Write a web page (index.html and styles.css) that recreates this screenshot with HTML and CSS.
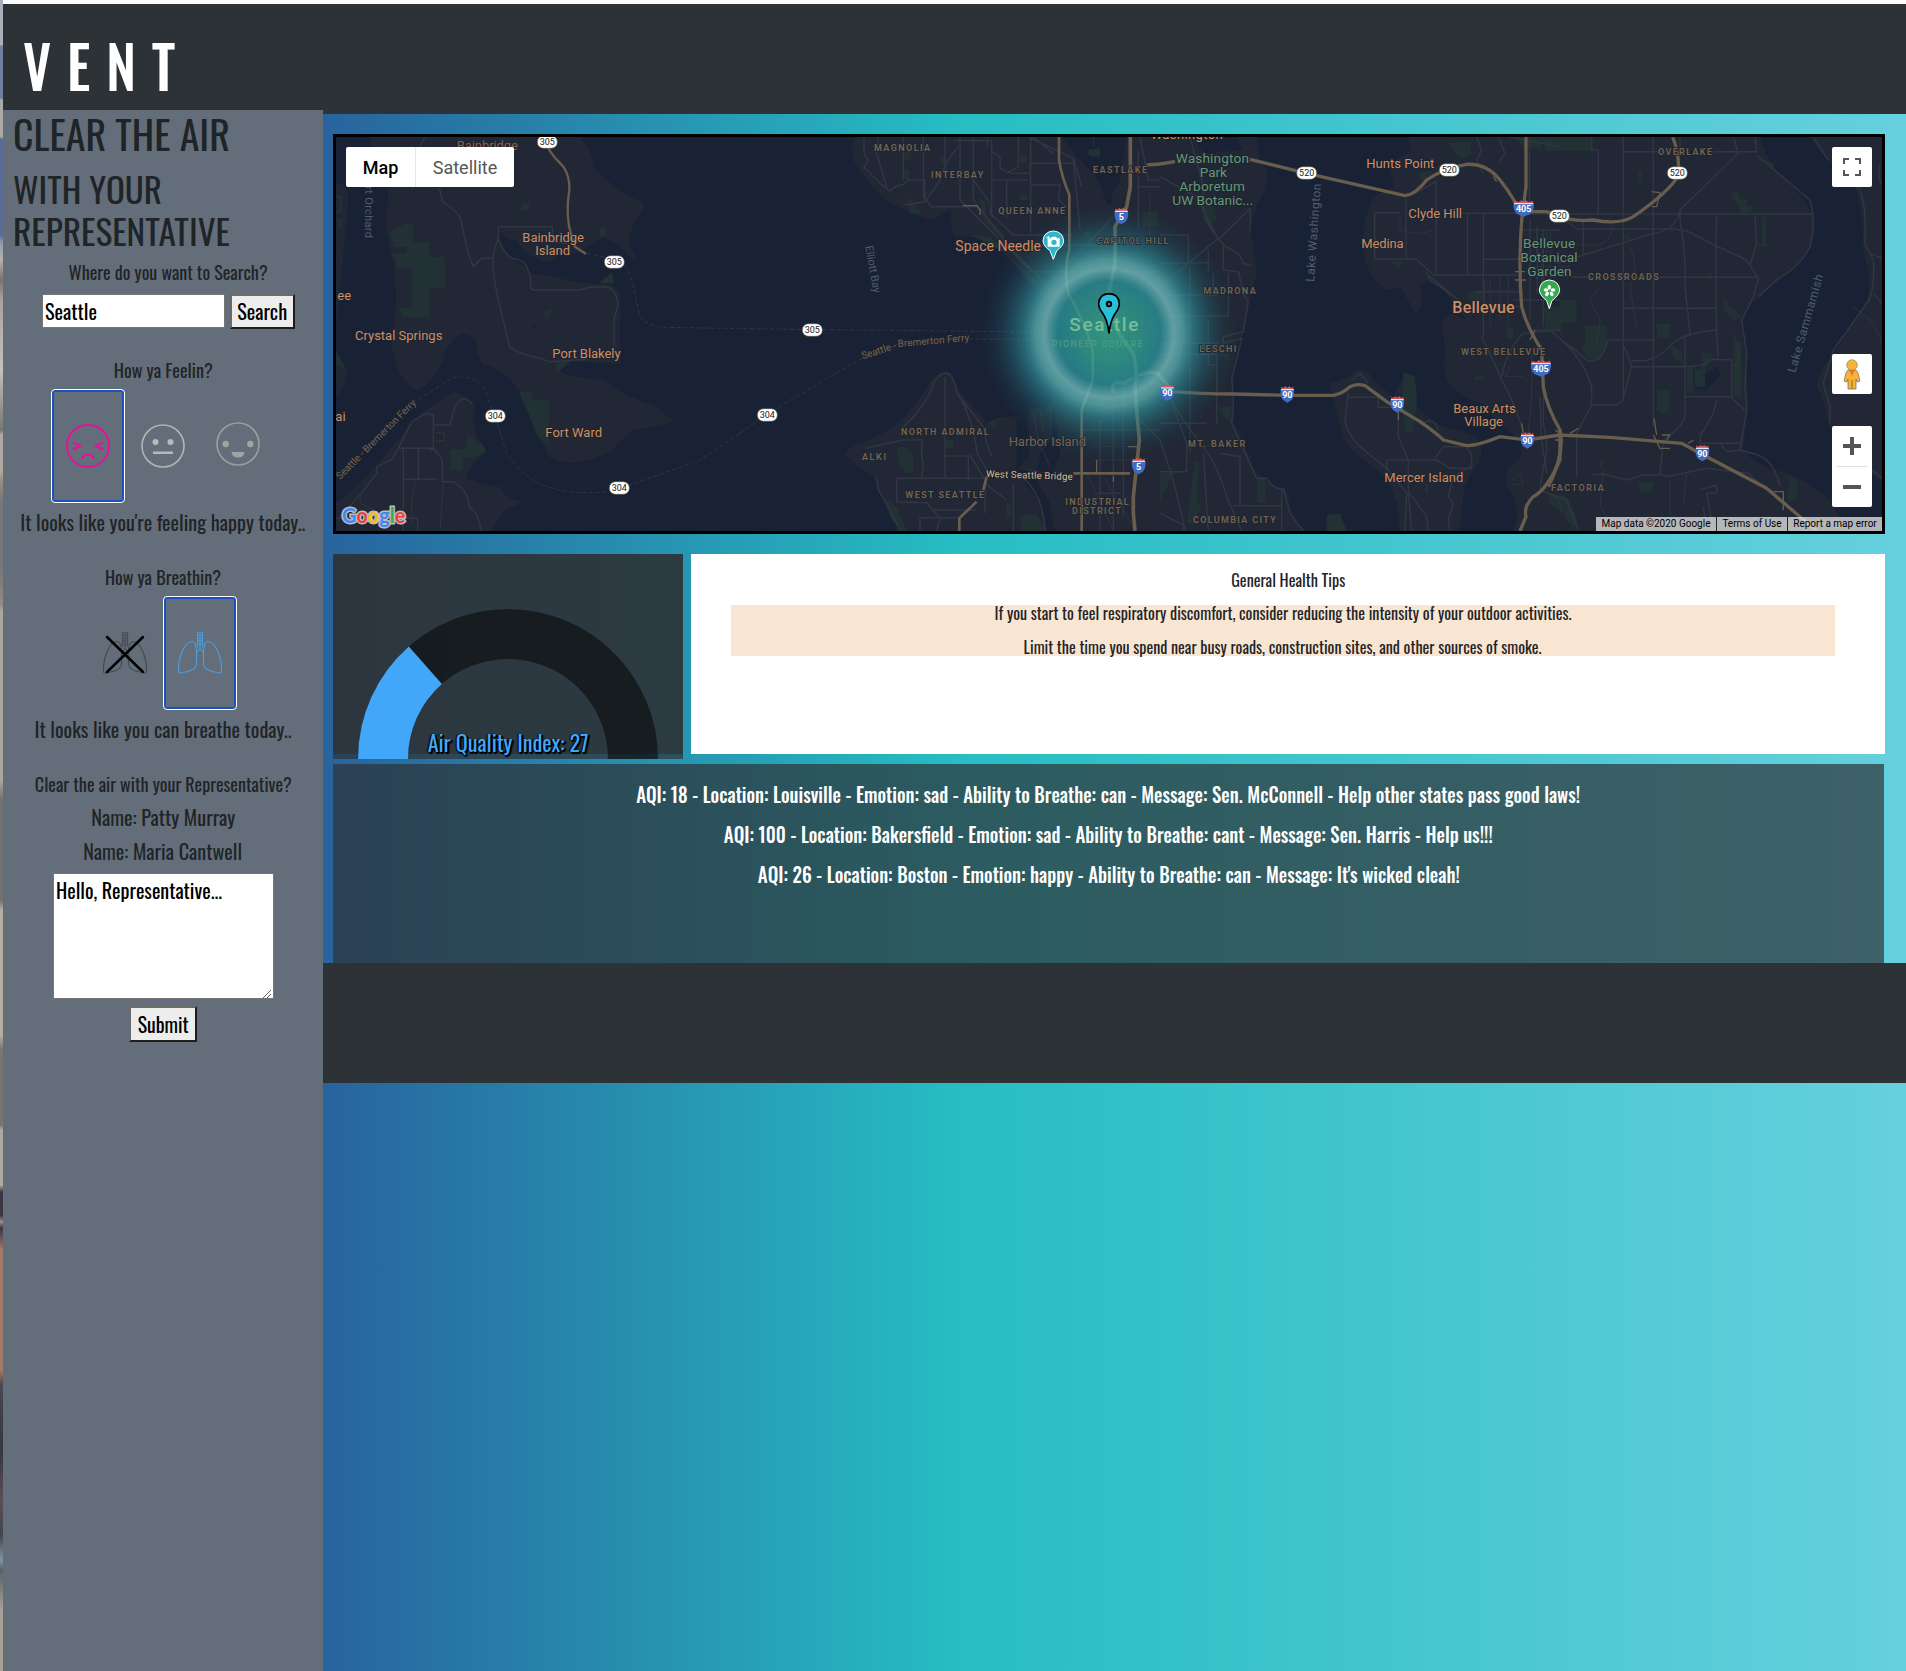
FILE: index.html
```html
<!DOCTYPE html>
<html lang="en">
<head>
<meta charset="utf-8">
<title>Vent</title>
<link rel="stylesheet" href="styles.css">
</head>
<body>
<div class="photo-edge"></div>
<div class="app">
<header class="header"><h1 class="logo fit left" data-w="168">VENT</h1></header>
<div class="body">
<aside class="sidebar">
  <h2 class="title"><span class="fit left" data-w="217">CLEAR THE AIR</span></h2>
  <h3 class="subtitle"><span class="fit left" data-w="149">WITH YOUR</span><span class="fit left" data-w="217">REPRESENTATIVE</span></h3>
  <div class="question first"><span class="fit" data-w="199">Where do you want to Search?</span></div>
  <div class="search-row">
    <div class="field"><span class="fit left" data-w="52">Seattle</span></div>
    <button class="btn search"><span class="fit" data-w="50">Search</span></button>
  </div>
  <div class="question"><span class="fit" data-w="99">How ya Feelin?</span></div>
  <div class="choices">
    <div class="choice selected"><svg width="46" height="46" viewBox="-23 -23 46 46" fill="none" stroke="#e6109b" stroke-width="2"><circle r="21"/><path d="M-15 -3.500L-8 0L-15 3.500M15 -3.500L8 0L15 3.500M-6 13Q-4 8.500 0 8.500T6 13" stroke-width="2.200"/></svg></div>
    <div class="choice"><svg width="46" height="46" viewBox="-23 -23 46 46" fill="#b9b9b9"><circle r="21" fill="none" stroke="#b4b4b4" stroke-width="1.600"/><circle cx="-7.500" cy="-4" r="3"/><circle cx="7.500" cy="-4" r="3"/><path d="M-10 5.500H10V8H-10Z"/></svg></div>
    <div class="choice raised"><svg width="46" height="46" viewBox="-23 -23 46 46" fill="#a2a2a2"><circle r="21" fill="none" stroke="#9c9c9c" stroke-width="1.700"/><circle cx="-12.300" r="3.200"/><circle cx="12.300" r="3.200"/><path d="M-6.500 8H6.500Q6 13.500 0 13.500T-6.500 8Z"/></svg></div>
  </div>
  <div class="answer"><span class="fit" data-w="285">It looks like you're feeling happy today..</span></div>
  <div class="question"><span class="fit" data-w="116">How ya Breathin?</span></div>
  <div class="choices pair">
    <div class="choice"><svg width="46" height="46" viewBox="0 0 46 46" fill="none" stroke="#454b52"><use href="#lungs"/><path d="M5 7L41 42M41 7L5 42" stroke="#000" stroke-width="2.500" stroke-linecap="round"/></svg></div>
    <div class="choice selected"><svg width="46" height="46" viewBox="0 0 46 46" fill="none" stroke="#4a9bdc"><g id="lungs" stroke-width="1.200"><path d="M20.500 17V3Q23 1.500 25.500 3V17M23 4V19M19.500 25V22L23 19L26.500 22V25M20.500 5H25.500M20.500 8H25.500M20.500 11H25.500M20.500 14H25.500"/><path d="M19.500 34V20Q19 11.500 14.500 11.500Q9 12 5 22Q1 32 1.500 41Q1.500 43.500 4 43L14 40.500Q19 38 19.500 34ZM26.500 34V20Q27 11.500 31.500 11.500Q37 12 41 22Q45 32 44.500 41Q44.500 43.500 42 43L32 40.500Q27 38 26.500 34Z"/></g></svg></div>
  </div>
  <div class="answer"><span class="fit" data-w="257">It looks like you can breathe today..</span></div>
  <div class="question"><span class="fit" data-w="257">Clear the air with your Representative?</span></div>
  <div class="reps"><div><span class="fit" data-w="144">Name: Patty Murray</span></div><div><span class="fit" data-w="159">Name: Maria Cantwell</span></div></div>
  <div class="message"><span class="fit left" data-w="166">Hello, Representative...</span><svg class="grip" width="8" height="8" viewBox="0 0 8 8" stroke="#666" fill="none"><path d="M0 8L8 0M4 8L8 4"/></svg></div>
  <button class="btn submit"><span class="fit" data-w="51">Submit</span></button>
</aside>
<div class="content">
<main class="main">
  <section class="map">
  <svg class="map-canvas" viewBox="336 137 1546 394" width="1546" height="394">
    <defs>
      <radialGradient id="glow"><stop offset="0" stop-color="#36b092" stop-opacity=".8"/><stop offset=".25" stop-color="#30a396" stop-opacity=".76"/><stop offset=".4" stop-color="#2a939b" stop-opacity=".78"/><stop offset=".5" stop-color="#71bcbd" stop-opacity=".8"/><stop offset=".57" stop-color="#58b0b3" stop-opacity=".77"/><stop offset=".66" stop-color="#2f939d" stop-opacity=".62"/><stop offset=".78" stop-color="#27808e" stop-opacity=".34"/><stop offset=".9" stop-color="#1f6678" stop-opacity=".12"/><stop offset="1" stop-color="#1f6678" stop-opacity="0"/></radialGradient>
      <g id="pill"><rect x="-30" y="-19" width="60" height="38" rx="18" fill="#fff" stroke="#59503f" stroke-width="2"/></g>
      <g id="inter"><path d="M-20 -15H20Q23 5 13 17L0 25L-13 17Q-23 5 -20 -15Z" fill="#3f6cc0"/><path d="M-18 -15V-23L-12 -19L-6 -24L0 -20L6 -24L12 -19L18 -23V-15Z" fill="#d65454"/><path d="M-19 -14H19" stroke="#fff" stroke-width="3"/></g>
      <g id="inter3"><path d="M-30 -15H30Q33 5 20 17L0 25L-20 17Q-33 5 -30 -15Z" fill="#3f6cc0"/><path d="M-28 -15V-22L-14 -19L-7 -24L0 -20L7 -24L14 -19L28 -22V-15Z" fill="#d65454"/><path d="M-29 -14H29" stroke="#fff" stroke-width="3"/></g>
    </defs>
    <rect x="336" y="137" width="1546" height="394" fill="#192134"/>
    <g class="land">
      <path transform="translate(320 120) scale(.33333)" d="M48 190Q85 190 85 240Q70 400 55 560L48 600ZM48 700Q85 740 80 770Q70 810 48 830ZM150 51H780Q820 100 820 140Q870 200 970 250Q975 270 945 300Q925 350 930 380L952 422Q920 410 895 375L850 350L780 395Q740 410 725 400L690 425Q640 420 610 390L590 360Q560 360 540 335V370L570 405Q610 440 640 462Q700 465 740 480Q800 495 870 490L900 520V730L740 724L715 750Q740 770 850 780Q910 830 1000 855L1062 903Q1000 925 940 930Q900 960 880 990Q820 1025 750 1028Q690 1025 680 1000Q670 960 640 920Q620 830 580 790Q540 740 490 735Q465 700 470 670Q440 620 400 660Q370 690 370 720Q330 800 290 812Q240 780 225 720Q205 650 220 620Q240 500 205 360Q190 300 205 250Q205 150 160 90ZM48 1233V1150Q100 1110 170 1035Q240 950 300 880Q360 840 400 815Q450 830 465 850Q455 920 470 950Q500 980 495 1000Q440 1050 440 1075Q500 1100 540 1100Q560 1140 600 1140Q600 1160 560 1165Q530 1200 515 1233Z"/>
      <path transform="translate(740 120) scale(.33333)" d="M345 51Q330 90 340 120Q380 190 440 240Q500 280 570 300Q600 290 630 270L640 350H690Q760 360 800 410L860 480Q900 520 940 560L1000 640L1050 800L960 830L920 860Q870 860 865 880V1010L830 1050V890Q780 885 740 910L720 880Q680 840 655 810Q640 760 610 755Q580 760 560 800Q520 870 460 920Q400 960 340 975L312 1000Q350 1040 400 1070Q420 1130 440 1170L480 1233H1262V51Z"/>
      <path transform="translate(1160 120) scale(.33333)" d="M0 51H300L320 130Q330 200 290 260L270 330Q290 420 290 460Q260 560 250 640Q220 700 220 780L215 900Q260 970 280 1050Q340 1100 380 1110Q390 1180 430 1233H0ZM745 51L755 90L690 130L700 200L640 230Q600 330 610 380Q620 480 680 510L720 500L770 585Q800 530 780 490Q830 480 850 510L920 600Q850 560 845 620Q860 700 850 740Q860 820 960 850Q1000 900 1080 960Q1100 1010 1050 1040Q1020 1080 1060 1130Q1080 1180 1060 1233H1202V51ZM510 790Q560 780 590 750Q620 740 640 780L700 830Q740 740 765 770L775 870Q820 900 850 920Q900 930 950 950Q980 1000 950 1040Q920 1070 910 1120L900 1233H720L710 1150L680 1070Q600 1020 550 960Q530 880 510 790ZM500 1185L535 1180L565 1233H500Z"/>
      <rect x="1559" y="137" width="323" height="394"/>
    </g>
    <g class="water">
      <path transform="translate(740 120) scale(.33333)" d="M965 51L1160 51L1140 180L1115 220Q1120 260 1100 250L1070 170L1010 110ZM940 850L960 1000L930 1080L890 1060L900 1000L935 960ZM830 1050H870L930 1150L945 1233H920L900 1150Z"/>
      <path transform="translate(1160 120) scale(.33333)" d="M100 51H230L250 90L130 100ZM290 51H330V150L300 130Z"/>
      <path transform="translate(1500 120) scale(.33333)" d="M780 51H930Q970 120 1050 170Q1090 230 1090 400Q1120 480 1100 540Q1050 620 1010 690L970 740Q940 800 960 820Q980 870 990 920L1100 1050L1146 1090V1233H1040L990 1140Q900 1060 820 1050Q730 1010 730 980L745 860Q740 750 740 700Q720 610 730 580Q830 480 880 440Q950 370 945 310Q930 250 860 180Q800 130 780 51ZM580 790L650 740L662 765L615 812L585 805ZM472 620L498 615L490 638H478Z"/>
      <path transform="translate(320 120) scale(.33333)" d="M275 405L290 398L305 410V432H290ZM638 612H646V625H638Z"/>
    </g>
    <g class="park">
      <path transform="translate(320 120) scale(.33333)" d="M208 335L255 312H278V365H327V410H374V506H327V592H250L236 563H274V443H233L217 400H260V381H222ZM604 250H628V274H604ZM838 325H860V345L838 350ZM835 488L875 460L885 490ZM670 575L700 560L680 602ZM596 815H638V838H686V970L655 955L625 880ZM390 986H440V940L495 980V995L470 1010L430 1015V1050H390ZM48 692L75 742L48 735ZM705 728L760 718L712 757Z"/>
      <path transform="translate(740 120) scale(.33333)" d="M490 100L510 95V120H490ZM488 148H508V178H488ZM603 112H618V135H603ZM840 105H860V130H840ZM715 230L735 245L740 290L780 330L800 350L770 345L730 300ZM838 225L862 220V240H838ZM690 345L750 350L830 430L900 490L880 495L800 400ZM502 225L520 250L545 280H510ZM1208 275H1255V320H1208ZM1040 90L1080 85V110H1050ZM615 960H640V985H615ZM470 980H500L520 1000V1060H500L475 1030ZM440 1140L470 1160L500 1233H480L450 1190ZM798 1150H815V1195H798ZM840 1185H890L920 1233H845ZM740 910L790 888L760 920ZM1035 335L1055 330V350H1035ZM520 908L560 903L540 912Z"/>
      <path transform="translate(1160 120) scale(.33333)" d="M120 250L160 260L170 300L150 320L130 300ZM865 70L930 65L935 100L910 120L880 95ZM770 160L825 150L790 190ZM693 425L730 420L715 450ZM925 515H965V542H925ZM1140 51H1200V90L1150 70ZM730 755L765 770L770 840L760 935H735L725 860ZM175 860H215V905L190 890ZM105 1025H118L110 1140L125 1160L100 1210H80ZM290 1080L315 1070V1150H290ZM500 1185L540 1180L560 1233H500ZM0 1060L45 1055L0 1145ZM185 700H205V730ZM940 770L970 765V780H945ZM1040 625H1060V650H1040ZM795 1092H805V1115H795Z"/>
      <path transform="translate(1500 120) scale(.33333)" d="M135 51H273V94H135ZM45 51H125V88L70 85ZM415 155H425V190H415ZM695 218L718 215V235L740 240V255L767 260L745 283H720V265L695 235ZM785 290H800V380H770V370H785ZM372 340L392 345V360H375ZM115 565L180 560V540H230V608H183V640L135 625V585ZM255 615H320V680Q300 725 275 722Q230 690 255 670ZM470 612H510V655H470ZM508 670L545 695L550 740H580V820H560V740L520 710ZM605 698H635V720L615 740V800H585V750H605ZM670 530L690 560L730 590L700 600L672 570ZM700 660L724 665V830H700ZM470 810H510V870L490 884L470 870ZM790 120L825 130L815 150ZM140 1120L200 1130L235 1200L220 1230L190 1180L150 1150ZM415 1085H460V1115H418ZM870 1075H890V1130L860 1150ZM590 940L605 930V945ZM20 630L40 620V655H20ZM300 1020H310V1043H300ZM610 458H635V470Z"/>
    </g>
    <g class="ferry">
      <path transform="translate(320 120) scale(.33333)" d="M48 1070L285 845L400 772Q460 765 490 800L525 890L560 1000Q620 1090 710 1108Q820 1130 900 1105Q1060 1050 1140 1020L1260 940M800 400L880 418Q920 430 935 480L960 590Q985 622 1040 622L1260 626L2160 636"/>
      <path transform="translate(740 120) scale(.33333)" d="M0 940L85 880L355 720L470 675Q560 655 700 657L1000 660"/>
    </g>
    <g class="roads">
      <path transform="translate(320 120) scale(.33333)" d="M315 51L300 80M358 205Q365 225 367 245Q400 265 420 290L445 400L460 440L487 414H520Q515 460 540 560L568 680Q600 705 650 712L690 725L800 718M520 414Q525 370 535 358V320H697V365L750 372M535 358Q550 400 575 415Q610 418 620 440L632 470V505L640 510H780Q820 495 870 504Q895 520 893 560L882 600V680M60 1190Q120 1130 170 1060V1040L215 1018L235 985H342L367 1020V1085H400Q450 1120 447 1160Q480 1180 482 1233M235 985L275 905L320 880L340 885V990M342 985L330 990M250 985V1233M295 985V1078M250 1078H350M48 1195H293V1233M343 915H390L405 860Q430 820 455 852" />
      <path class="minor" transform="translate(320 120) scale(.33333)" d="M48 230H62V275H48M48 300H65L55 325M345 938H373V962H345M120 1120V1150L160 1170M275 1210Q270 1110 300 1060M360 1233L370 1090"/>
      <path transform="translate(740 120) scale(.33333)" d="M372 51V100L385 120L372 142L420 190L450 213Q475 190 490 195L505 180H555V245L495 255M415 51L410 100L440 200M490 51V180M550 51V230L575 260H710M655 80Q610 130 600 180L555 245M615 51V175M640 62H755V95L780 110V145L815 160H870M700 51V240L800 370L960 540M742 51V80M660 51V240L870 450M755 95V290M755 180H865M800 180V290M872 51V340M870 160V130H1000M870 195H960L955 240L980 260M755 250L750 280L820 345H1000M835 51V140L800 160M865 51L1000 115L1025 200M700 180L750 250M880 51L940 100M1000 115L1020 330M1120 290L900 520M1200 51L1225 180H1260M1195 90V320M1260 200H1190M860 455H1260M870 375H1100M480 930Q560 860 580 790Q600 755 625 760Q645 775 650 820L730 920Q740 980 755 1010M615 770V1008H685V1080M615 1008V1075H470V1145L560 1148L600 1195L590 1233M375 985L490 960H548Q540 1000 550 1030L545 1075M410 1070L415 1110L440 1150L480 1233M580 1170H710M540 1233V1193H650M655 820Q700 900 712 1000L740 1050M690 1005L735 1080V1180M615 1075H730M735 1090L800 1140M820 1090V1233M845 1070Q910 1120 915 1233M1080 900V1233M1120 850V1233M1150 830V1190M1030 930H1260M1070 1120H1140M1200 900L1260 960"/>
      <path class="minor" transform="translate(740 120) scale(.33333)" d="M880 880L895 960L930 1040M900 870L910 930M860 1050L930 1060M1040 1060L1120 1233M1090 1070L1180 1220M1050 980H1180M1060 1020H1200M1060 51V80M1230 220V640M1205 430V700M1180 520V700M1130 430V860M1100 480V870M1150 470V850M1050 500H1260M1000 460L1150 610M980 490L1120 640M960 510L1090 650M1040 450L900 590M1070 480L950 600M1100 510L980 630M1120 550L1010 650M1160 400V540M1080 720H1250M1080 760H1250M1200 640H1260"/>
      <path transform="translate(1160 120) scale(.33333)" d="M0 170L110 230L175 360L270 265V340M90 51L130 200V260Q140 320 175 355L0 500M175 360L190 370V450L235 455L250 520L265 545L250 635L190 650V670L245 655L215 780Q225 850 215 910L290 1075H320Q340 1110 370 1105L390 1180L430 1233M190 375L240 405L250 430L272 435M0 345H85V430M0 430L150 428M145 390V455M160 460V520M90 440V1000M0 525H175M205 460V588H0M0 670H175M0 703H170V910M145 600V735H170V830M0 910H140M80 970V1055H0M0 790L70 900L150 1010Q180 1060 200 1130L245 1233M130 1000L145 1233M0 1180L70 1215V1233M240 1005V1155M220 1157H365V1110M365 1157V1233M0 960Q50 1100 75 1233M40 860L80 970M180 1000L240 1010M950 51L965 90L950 120L970 160M1015 51L1035 100L1015 130M1050 51L1200 80M644 278H720M644 278V417H768L820 465H1080M738 235V415M828 185V465M765 220L828 185M922 280V465M905 280H1080M970 280V650M970 418H1080M805 465L895 540M800 455L810 480L890 535M965 650Q1000 720 1025 780Q1060 840 1085 920M1025 770Q1040 690 1090 640L1200 630M1110 300V600M1132 320V520M1150 330V620M1060 540H1200M940 515H1080M970 560H1080M1080 330H1200M575 780L600 760L625 790M565 820L555 900Q560 940 600 980L680 1045L740 1120L735 1233M565 832H655V862H700M715 880V950L745 1020V1115L800 1190L805 1233M680 1020H830L870 1045H935V1000L920 985M825 1015L850 980H910M680 1020V1045M745 1120L755 1233M930 1040L880 1070L865 1130L880 1150L865 1200L870 1233M790 910Q820 890 835 930M1140 830L1145 960L1160 1060"/>
      <path class="minor" transform="translate(1160 120) scale(.33333)" d="M720 290V330Q770 350 820 330M975 480V560M990 470V620M1020 470V600M1045 470V620M1170 330V460M1115 700Q1120 860 1100 960M1060 1080L1080 1060L1090 1090L1060 1095M1050 740L1035 770L1090 770"/>
      <path transform="translate(1500 120) scale(.33333)" d="M88 51V250M250 300V410M275 51V90H295V280M370 51V840L350 855H275M460 51V920M372 95H500M640 95H770L765 51M700 51L715 100L540 270Q530 330 460 340L170 430M80 282H935M195 300L230 327H525L555 335M540 270V300Q560 420 555 500L570 640M555 330L650 378L740 420L775 475L760 530L725 600L740 700L735 800L740 870L720 990L755 1000Q820 1010 840 1100M650 290L648 380V530L650 640L655 710M765 290L770 370L750 435M540 51V90M770 105L930 240Q950 310 930 380Q900 440 830 480L775 530M215 472H770M370 565H650M650 630Q550 640 520 670Q470 720 430 722H395M100 630H150L190 665Q240 700 260 720Q300 740 325 660H465M370 675L395 735L370 835M395 740H535Q620 740 635 718L695 720V830H555M555 650V880Q560 910 490 960L480 1060L500 1070L620 1045L745 1060L800 1110M650 840L640 880L600 950V970H720M690 830L735 870M190 665Q250 720 275 800V855L230 940V1070M275 1065L310 1062L380 1080L430 1065H480M940 51L985 120M1000 130L1080 210Q1100 260 1095 370L1120 420Q1125 520 1100 550L1000 690L970 790L990 860V910M1140 130Q1130 180 1146 190M1110 400L1146 415M1120 520L1146 550M1060 1000L1146 1075M130 780V910Q150 990 130 1040L120 1110L200 1140L235 1233M660 970L680 995L720 990M600 1110L650 1095V1120H620L640 1233M620 1233L610 1160"/>
      <path class="minor" transform="translate(1500 120) scale(.33333)" d="M390 380Q420 450 390 500L410 620M330 290Q350 350 300 375H200M300 500L270 540L300 600L290 670M700 640L720 700L705 740M310 1050L300 1160L350 1233M510 1080V1200M560 1060L550 1150M110 320V420M125 340V500M140 330V420M90 440H210M90 470H210M150 1120Q190 1140 180 1180M1060 560L1110 600L1146 660"/>
    </g>
    <g class="highway thin">
      <path transform="translate(740 120) scale(.33333)" d="M668 257H710L720 270V285M1070 1020V1060M1120 1085V1068M1165 980H1200"/>
      <path transform="translate(1160 120) scale(.33333)" d="M715 870V900M1085 910L1090 940M1125 630L1110 660M1000 170L1010 185"/>
      <path transform="translate(1500 120) scale(.33333)" d="M462 895L470 945M460 945L480 985H510M485 945H510L500 960M165 930L190 945M235 925L210 940M165 960H190M455 215L480 218L470 260H455M820 1115H850V1170M565 970L580 960M45 455H75M45 480H78"/>
    </g>
    <g class="highway">
      <path transform="translate(320 120) scale(.33333)" stroke-width="7" d="M685 85Q695 105 730 140Q750 170 748 210Q735 290 755 350L765 380L798 402"/>
      <path transform="translate(740 120) scale(.33333)" d="M957 51V120Q965 170 988 225V390Q970 450 985 520Q1040 620 1058 690V780L1025 870V1233M1000 1060H1170M730 1110L740 1070M710 1145L658 1195V1233"/>
      <path transform="translate(740 120) scale(.33333)" stroke-width="11" d="M1171 51V200L1160 260L1125 320V430Q1110 500 1105 530Q1110 620 1180 700Q1195 760 1185 800Q1190 880 1198 960L1180 1130V1180L1185 1233M1220 135L1260 132M1120 820Q1110 780 1150 790Q1230 740 1262 765"/>
      <path transform="translate(1160 120) scale(.33333)" stroke-width="10" d="M0 132L45 125M0 770L40 815Q120 822 220 822L380 826H520Q550 820 570 800Q590 790 615 797L680 845L780 905Q830 940 850 960L920 977Q950 978 1020 950L1100 960L1200 945M270 118L440 160L735 227Q765 225 800 180Q850 145 920 133Q980 130 1020 180Q1060 230 1085 285M1098 51V200L1085 300Q1075 440 1085 560Q1100 620 1145 690L1150 800Q1160 860 1200 930V1020Q1160 1110 1120 1130Q1090 1160 1098 1190L1080 1233M1090 275H1160L1200 288"/>
      <path transform="translate(1500 120) scale(.33333)" stroke-width="10" d="M180 930Q195 1000 145 1100M180 288Q210 305 280 300Q360 315 400 290Q500 220 530 175Q545 120 518 51M180 945L330 952L545 970L600 1000L800 1105L950 1233"/>
    </g>
    <circle cx="1109" cy="333" r="129" fill="url(#glow)"/>
    <g class="labels" transform="translate(320 120) scale(.33333)">
      <g class="town"><text x="410" y="91" textLength="184" fill-opacity=".6">Bainbridge</text><text x="607" y="365" textLength="185">Bainbridge</text><text x="646" y="404" textLength="104">Island</text><text x="105" y="659" textLength="262">Crystal Springs</text><text x="697" y="713" textLength="205">Port Blakely</text><text x="676" y="950" textLength="170">Fort Ward</text><text x="52" y="540">ee</text><text x="46" y="902">ai</text></g>
      <text class="waterway" transform="translate(136 198) rotate(90)" textLength="156">rt Orchard</text>
      <text class="route" transform="translate(60 1080) rotate(-45)" textLength="325">Seattle - Bremerton Ferry</text>
      <g class="num"><use href="#pill" x="682" y="66"/><text x="682" y="76">305</text><use href="#pill" x="883" y="426"/><text x="883" y="436">305</text><use href="#pill" x="526" y="888"/><text x="526" y="898">304</text><use href="#pill" x="898" y="1104"/><text x="898" y="1114">304</text></g>
      <text class="google" x="66" y="1210" textLength="190" lengthAdjust="spacingAndGlyphs"><tspan fill="#4285f4">G</tspan><tspan fill="#ea4335">o</tspan><tspan fill="#fbbc05">o</tspan><tspan fill="#4285f4">g</tspan><tspan fill="#34a853">l</tspan><tspan fill="#ea4335">e</tspan></text>
    </g>
    <g class="labels" transform="translate(740 120) scale(.33333)">
      <g class="area"><text x="402" y="94" textLength="168">MAGNOLIA</text><text x="573" y="175" textLength="157">INTERBAY</text><text x="775" y="283" textLength="200">QUEEN ANNE</text><text x="1059" y="160" textLength="162">EASTLAKE</text><text x="1068" y="373" textLength="217">CAPITOL HILL</text><text x="483" y="946" textLength="263">NORTH ADMIRAL</text><text x="366" y="1021" textLength="72">ALKI</text><text x="496" y="1135" textLength="236">WEST SEATTLE</text><text x="976" y="1156" textLength="190">INDUSTRIAL</text><text x="996" y="1183" textLength="146">DISTRICT</text></g>
      <text class="square" x="936" y="681" textLength="272">PIONEER SQUARE</text>
      <text class="city" x="988" y="632" textLength="207">Seattle</text>
      <text class="town needle" x="646" y="394" textLength="257">Space Needle</text>
      <text class="island" x="806" y="977" textLength="232">Harbor Island</text>
      <text class="bridge" transform="translate(738 1071) rotate(2)" textLength="260">West Seattle Bridge</text>
      <text class="waterway" transform="translate(376 379) rotate(80)" textLength="143">Elliott Bay</text>
      <g class="route"><text transform="translate(368 718) rotate(-18)" textLength="107">Seattle -</text><text transform="translate(474 681) rotate(-5)" textLength="215">Bremerton Ferry</text></g>
      <g class="num"><use href="#pill" x="217" y="630"/><text x="217" y="640">305</text><use href="#pill" x="82" y="885"/><text x="82" y="895">304</text></g>
      <g class="inum"><use href="#inter" x="1144" y="288"/><text x="1144" y="301">5</text><use href="#inter" x="1196" y="1038"/><text x="1196" y="1051">5</text></g>
      <path d="M940 418L930 392Q910 378 909 363Q911 335 940 333Q969 335 971 363Q970 378 950 392Z" fill="#2cb7cb" stroke="#fff" stroke-width="3"/>
      <path d="M923 355H932L936 350H948L952 355H959V380H923Z" fill="#fff"/><circle cx="942" cy="367" r="8" fill="#2cb7cb"/><path d="M920 353H930M925 348V358" stroke="#fff" stroke-width="3"/>
      <path d="M1107 640Q1103 600 1087 578Q1076 565 1076 549Q1079 522 1107 521Q1135 522 1138 549Q1138 565 1127 578Q1111 600 1107 640Z" fill="#28c0d8" stroke="#000" stroke-width="5"/><circle cx="1107" cy="552" r="7" fill="#50707d" stroke="#000" stroke-width="5"/>
    </g>
    <g class="labels" transform="translate(1160 120) scale(.33333)">
      <g class="town"><text x="-28" y="58" textLength="216">Washington</text><text x="619" y="143" textLength="204">Hunts Point</text><text x="745" y="293" textLength="161">Clyde Hill</text><text x="604" y="383" textLength="127">Medina</text><text x="880" y="878" textLength="187">Beaux Arts</text><text x="913" y="917" textLength="116">Village</text><text x="673" y="1085" textLength="237">Mercer Island</text><text class="large" x="877" y="578" textLength="187">Bellevue</text></g>
      <g class="garden"><text x="47" y="129" textLength="220">Washington</text><text x="119" y="171" textLength="82">Park</text><text x="58" y="214" textLength="197">Arboretum</text><text x="37" y="255" textLength="242">UW Botanic...</text></g>
      <g class="area"><text x="130" y="522" textLength="157">MADRONA</text><text x="118" y="696" textLength="111">LESCHI</text><text x="84" y="981" textLength="172">MT. BAKER</text><text x="99" y="1209" textLength="248">COLUMBIA CITY</text><text x="903" y="705" textLength="252">WEST BELLEVUE</text></g>
      <text class="waterway lake" transform="translate(462 486) rotate(-86)" textLength="295">Lake Washington</text>
      <g class="num"><use href="#pill" x="440" y="159"/><text x="440" y="169">520</text><use href="#pill" x="868" y="150"/><text x="868" y="160">520</text></g>
      <g class="inum"><use href="#inter" x="22" y="818"/><text x="22" y="829">90</text><use href="#inter" x="382" y="823"/><text x="382" y="834">90</text><use href="#inter" x="712" y="853"/><text x="712" y="864">90</text><use href="#inter" x="1102" y="961"/><text x="1102" y="972">90</text><use href="#inter3" x="1091" y="265"/><text x="1091" y="276">405</text><use href="#inter3" x="1143" y="745"/><text x="1143" y="756">405</text></g>
    </g>
    <g class="labels" transform="translate(1500 120) scale(.33333)">
      <g class="garden"><text x="69" y="384" textLength="157">Bellevue</text><text x="61" y="426" textLength="172">Botanical</text><text x="82" y="468" textLength="133">Garden</text></g>
      <g class="area"><text x="474" y="105" textLength="162">OVERLAKE</text><text x="264" y="480" textLength="212">CROSSROADS</text><text x="153" y="1113" textLength="158">FACTORIA</text></g>
      <text class="waterway lake" transform="translate(886 760) rotate(-74)" textLength="305">Lake Sammamish</text>
      <g class="num"><use href="#pill" x="178" y="288"/><text x="178" y="298">520</text><use href="#pill" x="532" y="159"/><text x="532" y="169">520</text></g>
      <g class="inum"><use href="#inter" x="607" y="999"/><text x="607" y="1010">90</text></g>
      <path d="M148 566L140 542Q119 525 118 511Q120 482 148 480Q177 482 179 511Q178 525 156 542Z" fill="#35a853" stroke="#fff" stroke-width="3"/>
      <g fill="#fff"><ellipse cx="148" cy="502" rx="5" ry="7"/><ellipse cx="138" cy="510" rx="7" ry="5"/><ellipse cx="159" cy="510" rx="7" ry="5"/><ellipse cx="141" cy="522" rx="5" ry="7" transform="rotate(35 141 522)"/><ellipse cx="155" cy="522" rx="5" ry="7" transform="rotate(-35 155 522)"/></g>
    </g>
  </svg>
  <div class="map-type"><span class="active">Map</span><span>Satellite</span></div>
  <div class="map-tools">
    <div class="tool"><svg width="18" height="18" fill="none" stroke="#555" stroke-width="2"><path d="M1 6V1H6M12 1H17V6M17 12V17H12M6 17H1V12"/></svg></div>
    <div class="tool pegman"><svg width="18" height="31" viewBox="0 0 18 31"><path d="M5 11H13L15 14L17 22L14 23L13 20V30H5V20L4 23L1 22L3 14Z" fill="#f9b233" stroke="#777" stroke-width=".8"/><path d="M6 11H12L9 17Z" fill="#e87a2c"/><circle cx="9" cy="6" r="5.300" fill="#f9b233" stroke="#777" stroke-width=".6"/><path d="M9 21V30" stroke="#8a6d2a"/></svg></div>
    <div class="tool zoom"><svg width="30" height="81" viewBox="0 0 30 81" stroke="#555" stroke-width="4"><path d="M6 20H24M15 11V29M6 61H24"/><path d="M0 40.500H30" stroke="#ddd" stroke-width="1"/></svg></div>
  </div>
  <div class="credits"><span>Map data ©2020 Google</span><span>Terms of Use</span><span>Report a map error</span></div>
  </section>
  <div class="widgets">
    <section class="gauge"><div class="gauge-inner"><svg width="350" height="205" viewBox="0 0 350 205"><path d="M25 205A150 150 0 0 1 325 205H275A100 100 0 0 0 75 205Z" fill="#000" fill-opacity=".5"/><path d="M25 205A150 150 0 0 1 75.800 92.500L108.900 130A100 100 0 0 0 75 205Z" fill="#42a7f8"/></svg><div class="gauge-label"><span class="fit" data-w="161">Air Quality Index: 27</span></div></div></section>
    <section class="tips"><h4><span class="fit" data-w="114">General Health Tips</span></h4><div class="tip-box"><p><span class="fit" data-w="577">If you start to feel respiratory discomfort, consider reducing the intensity of your outdoor activities.</span></p><p><span class="fit" data-w="518">Limit the time you spend near busy roads, construction sites, and other sources of smoke.</span></p></div></section>
  </div>
  <section class="feed">
    <p><span class="fit" data-w="944">AQI: 18 - Location: Louisville - Emotion: sad - Ability to Breathe: can - Message: Sen. McConnell - Help other states pass good laws!</span></p>
    <p><span class="fit" data-w="769">AQI: 100 - Location: Bakersfield - Emotion: sad - Ability to Breathe: cant - Message: Sen. Harris - Help us!!!</span></p>
    <p><span class="fit" data-w="702">AQI: 26 - Location: Boston - Emotion: happy - Ability to Breathe: can - Message: It's wicked cleah!</span></p>
  </section>
</main>
<footer class="footer"></footer>
</div>
</div>
</div>
<script src="fit.js"></script>
</body>
</html>
```
FILE: styles.css
```css
* { box-sizing: border-box; }
body { margin: 0; display: flex; height: 1671px; overflow: hidden; background: #fff; font-family: Oswald, "Liberation Sans Narrow", "Roboto Condensed", Roboto, sans-serif; font-stretch: 75%; color: #1f2427; }
h1, h2, h3, h4, p { margin: 0; font-weight: 400; }
.photo-edge { width: 3px; background: linear-gradient(#a9b0b8 0 45px, #6f80a0 46px 98px, #aaa9a5 100px 137px, #586c96 139px 235px, #8f9aae 242px, #b5b2ab 260px, #806f70 280px, #aaa39e 300px, #c3c1bc 370px, #777 430px, #b0aba2 435px 470px, #a08c7d 480px, #77777a 500px 570px, #918c85 605px, #aaa79c 610px 780px, #707170 800px 900px, #b3aea2 910px 1035px, #777570 1050px 1125px, #adab9f 1130px 1185px, #3b3541 1192px 1215px, #9c9186 1222px, #373746 1228px, #a07b69 1250px 1370px, #4a4850 1385px, #34373e 1450px, #5b4f57 1500px, #40454c 1535px, #80979f 1560px, #55616b 1570px, #a7a095 1610px, #a7a095); }
.app { flex: 1; display: flex; flex-direction: column; min-width: 0; }
.header { height: 114px; flex: none; background: #2d3236; border-top: 4px solid #fbfbfb; padding: 21px 0 0 20px; }
.logo { display: inline-block; color: #fff; font-size: 59px; line-height: 80px; letter-spacing: 17px; font-weight: 500; }
.body { flex: 1; display: flex; background: linear-gradient(90deg, #28639d 320px, #26bdc3 953px, #66d0de); }
.fit { display: inline-block; flex: none; white-space: pre; transform-origin: center; }
.fit.left { transform-origin: left; }

.sidebar { width: 320px; height: 1561px; margin-top: -4px; background: #646e7a; flex: none; display: flex; flex-direction: column; align-items: center; font-size: 19.500px; }
.title { align-self: stretch; padding-left: 10px; font-size: 39.500px; line-height: 47px; height: 49px; }
.subtitle { align-self: stretch; display: flex; flex-direction: column; align-items: flex-start; margin-top: 9px; padding-left: 10px; font-size: 34.500px; line-height: 42px; height: 85px; }
.question { height: 29px; line-height: 29px; margin-top: 27px; width: 320px; display: flex; justify-content: center; font-size: 17.800px; }
.first { margin-top: 5px; padding-left: 10px; }
.search-row { display: flex; gap: 5px; height: 35px; margin: 7px 0 0 11px; }
.field { width: 183px; height: 34px; background: #fff; border: 1px solid #767676; padding: 0 2px; line-height: 34px; color: #000; }
.btn { border: 2px solid; border-color: #6b6b6b #1d1d1d #1d1d1d #6b6b6b; background: #ededed; color: #000; padding: 0; font: inherit; display: flex; align-items: center; justify-content: center; }
.search { width: 65px; height: 35px; }
.submit { width: 68px; height: 36px; margin: 7px 0 0; }
.choices { display: flex; gap: 1px; height: 114px; margin-top: 4px; }
.pair { margin-right: 1px; }
.choice { width: 74px; height: 114px; display: flex; align-items: center; justify-content: center; }
.selected { border: 1px solid #fff; border-radius: 4px; box-shadow: inset 0 0 0 2px #1d50c4; }
.raised { padding-bottom: 4px; }
.answer { height: 26px; line-height: 26px; margin-top: 7px; width: 320px; display: flex; justify-content: center; }
.reps { line-height: 34px; margin-top: 2px; width: 320px; }
.reps div { display: flex; justify-content: center; }
.message { width: 221px; height: 126px; margin-top: 4px; background: #fff; border: 1px solid #767676; color: #000; padding: 0 2px; line-height: 34px; display: flex; justify-content: space-between; }
.message .fit { width: 0; }
.grip { align-self: flex-end; }

.content { flex: 1; min-width: 0; }
.main { height: 849px; padding: 20px 21px 0 10px; }
.map { position: relative; width: 1552px; height: 400px; border: 3px solid #000; font-family: Roboto, sans-serif; font-stretch: 100%; overflow: hidden; }
.map-canvas { display: block; }
.land { fill: #212734; }
.water { fill: #192134; }
.park { fill: #223133; }
.roads { fill: none; stroke: #303643; stroke-width: 4.500; stroke-linejoin: round; }
.roads .minor { stroke-width: 2.500; }
.ferry { fill: none; stroke: #303b45; stroke-width: 2.500; stroke-dasharray: 13 7; }
.highway { fill: none; stroke: #695d4d; stroke-width: 8; stroke-linejoin: round; }
.highway.thin { stroke-width: 4; }
.labels text { stroke: #1d2431; stroke-width: 4; paint-order: stroke; font-size: 39px; }
.town, .labels .town { fill: #d08e61; }
.labels .needle { font-size: 42px; }
.labels .large { font-size: 48px; font-weight: 500; }
.labels .area text, .labels .square { font-size: 27px; font-weight: 600; fill: #75644f; }
.labels .square { fill: #499b83; stroke: none; }
.labels .city { font-size: 57px; font-weight: 500; fill: #77bd98; stroke: none; }
.labels .island { fill: #75644f; }
.labels .garden text { fill: #669875; font-size: 41px; }
.labels .waterway { fill: #515c6d; font-size: 33px; stroke: none; }
.labels .lake { font-size: 36px; }
.labels .route, .labels .route text { fill: #75644f; font-size: 30px; }
.labels .bridge { fill: #d8bf92; font-size: 29px; }
.labels .num text { font-size: 27px; text-anchor: middle; fill: #222; stroke: none; }
.labels .inum text { font-size: 27px; font-weight: 700; text-anchor: middle; fill: #fff; stroke: none; }
.labels .google { font-family: Lato, sans-serif; font-size: 60px; font-weight: 700; stroke: #b9bcc4; stroke-width: 9; }
.map-type { position: absolute; left: 10px; top: 10px; display: flex; height: 40px; background: #fff; border-radius: 2px; font-size: 18px; line-height: 41px; color: #565656; }
.map-type span { width: 98px; text-align: center; }
.map-type .active { width: 70px; color: #000; font-weight: 500; border-right: 1px solid #e6e6e6; }
.map-tools { position: absolute; right: 10px; top: 10px; }
.tool { width: 40px; height: 40px; background: #fff; border-radius: 2px; display: flex; align-items: center; justify-content: center; }
.pegman { margin-top: 167px; }
.zoom { height: 81px; margin-top: 32px; }
.credits { position: absolute; right: 0; bottom: 0; display: flex; gap: 1px; font-size: 10px; line-height: 14px; color: #000; white-space: nowrap; }
.credits span { background: rgba(245, 245, 245, .7); width: 70px; text-align: center; }
.credits span:first-child { width: 120px; }
.credits span:last-child { width: 94px; }
.widgets { display: flex; gap: 8px; height: 200px; margin-top: 20px; }
.gauge { width: 350px; background: rgba(45, 50, 54, .7); }
.gauge-inner { position: relative; height: 205px; background: rgba(45, 50, 54, .7); }
.gauge-inner svg { display: block; }
.gauge-label { position: absolute; left: 0; right: 0; bottom: 0; height: 32px; display: flex; justify-content: center; font-size: 21.500px; line-height: 31px; color: #42a7f8; text-shadow: 2px 1px 1px #000, 1px 2px 1px #000, -1px 0 1px #000; }
.tips { width: 1194px; background: #fff; padding: 9px 42px 0 40px; }
.tips h4, .tips p { display: flex; justify-content: center; font-size: 16.800px; }
.tips h4 { line-height: 33px; height: 42px; }
.tips h4 .fit { margin-left: 2px; }
.tip-box { width: 1104px; height: 51px; background: #f8e6d3; }
.tips p { line-height: 16px; height: 34px; }
.feed { width: 1551px; height: 199px; margin-top: 10px; padding-top: 10px; background: rgba(45, 50, 54, .7); color: #fff; font-size: 20px; }
.feed p { height: 40px; line-height: 40px; display: flex; justify-content: center; font-weight: 500; }
.footer { height: 120px; background: #2d3236; }
```
FILE: fit.js
```js
document.querySelectorAll('.fit').forEach(function (el) {
  var range = document.createRange();
  range.selectNodeContents(el);
  var natural = range.getBoundingClientRect().width;
  el.style.transform = 'scaleX(' + (Number(el.dataset.w) / natural) + ')';
});
```
